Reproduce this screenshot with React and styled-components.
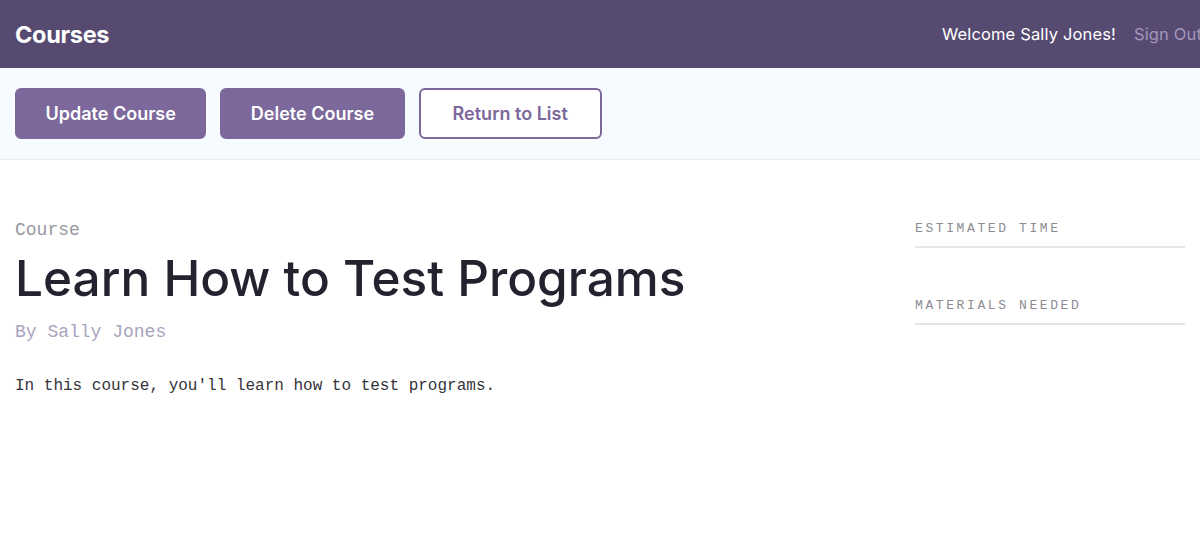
import React from 'react';
import styled, { createGlobalStyle } from 'styled-components';

const GlobalStyle = createGlobalStyle`
    html, body {
        margin: 0;
        padding: 0;
        background: #fff;
        overflow-x: hidden;
    }
    * { box-sizing: border-box; }
`;

const Header = styled.header`
    height: 68px;
    background-color: #564a71;
    display: flex;
    align-items: center;
    justify-content: space-between;
    padding: 0 15px;
    font-family: 'Inter', 'Open Sans', sans-serif;
    overflow: hidden;
`;

const Logo = styled.h1`
    margin: 0;
    font-size: 23.5px;
    font-weight: 700;
    color: #fff;
    letter-spacing: -0.3px;
`;

const Nav = styled.nav`
    display: flex;
    align-items: center;
    gap: 18px;
    margin-right: -17px;
    font-size: 16.5px;
`;

const NavText = styled.span`
    color: ${props => (props.muted ? '#a496bd' : '#fff')};
    letter-spacing: 0.15px;
    white-space: nowrap;
`;

const ActionBar = styled.div`
    background-color: #f6fbff;
    border-bottom: 1px solid #e8eef3;
    padding: 20px 15px;
    display: flex;
    gap: 14px;
`;

const Button = styled.button`
    height: 51px;
    padding: 0 ${props => (props.outline ? '32px' : '28.5px')};
    border-radius: 6px;
    font-family: 'Inter', 'Open Sans', sans-serif;
    font-size: 18px;
    font-weight: 600;
    cursor: pointer;
    background-color: ${props => (props.outline ? '#fff' : '#7c689b')};
    color: ${props => (props.outline ? '#7c689b' : '#fff')};
    border: 2px solid #7c689b;
`;

const Main = styled.main`
    display: grid;
    grid-template-columns: 1fr 270px;
    gap: 40px;
    padding: 60px 15px 0;
`;

const Label = styled.h4`
    margin: 0;
    font-family: 'Liberation Mono', monospace;
    font-size: 18px;
    font-weight: 400;
    color: #99979e;
`;

const Title = styled.h3`
    margin: 9px 0 0;
    font-family: 'Inter', 'Open Sans', sans-serif;
    font-size: 49.5px;
    font-weight: 500;
    color: #23222e;
    line-height: 1.2;
`;

const Author = styled.p`
    margin: 14px 0 0;
    font-family: 'Liberation Mono', monospace;
    font-size: 18px;
    color: #a8a4c0;
`;

const Description = styled.p`
    margin: 35px 0 0;
    font-family: 'Liberation Mono', monospace;
    font-size: 16px;
    color: #34343a;
`;

const Sidebar = styled.aside`
    display: flex;
    flex-direction: column;
    gap: 50px;
    padding-top: 1px;
`;

const SideHeading = styled.h4`
    margin: 0;
    padding-bottom: 10px;
    border-bottom: 2px solid #e6e6e8;
    font-family: 'Liberation Mono', monospace;
    font-size: 13px;
    font-weight: 400;
    letter-spacing: 2.6px;
    color: #8d8b92;
`;

export default function App() {
    return (
        <>
            <GlobalStyle />
            <Header>
                <Logo>Courses</Logo>
                <Nav>
                    <NavText>Welcome Sally Jones!</NavText>
                    <NavText muted>Sign Out</NavText>
                </Nav>
            </Header>
            <ActionBar>
                <Button>Update Course</Button>
                <Button>Delete Course</Button>
                <Button outline>Return to List</Button>
            </ActionBar>
            <Main>
                <div>
                    <Label>Course</Label>
                    <Title>Learn How to Test Programs</Title>
                    <Author>By Sally Jones</Author>
                    <Description>In this course, you'll learn how to test programs.</Description>
                </div>
                <Sidebar>
                    <SideHeading>ESTIMATED TIME</SideHeading>
                    <SideHeading>MATERIALS NEEDED</SideHeading>
                </Sidebar>
            </Main>
        </>
    );
}
